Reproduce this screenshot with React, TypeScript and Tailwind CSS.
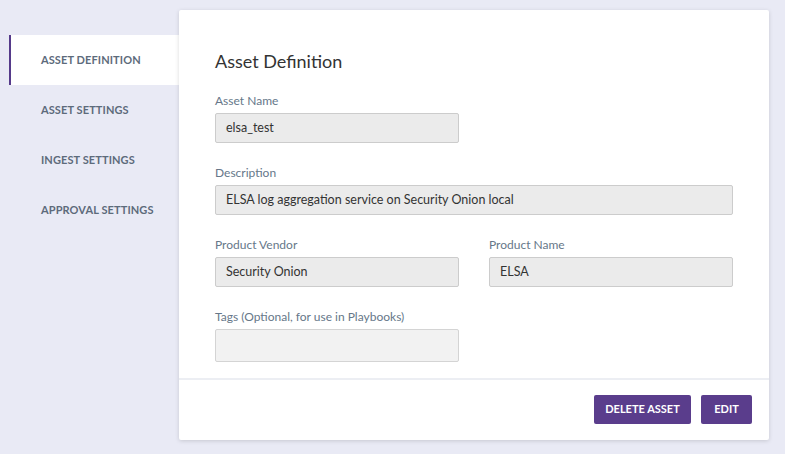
import React from "react";

const navItems = ["Asset Definition", "Asset Settings", "Ingest Settings", "Approval Settings"];

const Field = ({
  label,
  value,
  className,
}: {
  label: string;
  value?: string;
  className?: string;
}) => (
  <div className={className}>
    <p className="text-[12px] leading-[16px] text-[#667789] mb-[4px]">{label}</p>
    <div className="h-[30px] bg-[#ebebeb] border border-[#cccccc] rounded-[2px] px-[10px] flex items-center text-[12.5px] text-[#333]">
      {value}
    </div>
  </div>
);

const App = () => {
  return (
    <div
      className="w-[785px] h-[454px] bg-[#e9eaf5] flex pt-[10px] overflow-hidden"
      style={{ fontFamily: "Lato, 'Open Sans', sans-serif" }}
    >
      <div className="w-[179px] pt-[25px] pl-[9px] shrink-0">
        {navItems.map((item, i) => (
          <div
            key={item}
            className={
              i === 0
                ? "h-[50px] flex items-center pl-[30px] bg-white border-l-2 border-[#553a8a] text-[11px] font-bold uppercase text-[#5d6b7b] tracking-[0.1px]"
                : "h-[50px] flex items-center pl-[32px] text-[11px] font-bold uppercase text-[#5d6b7b] tracking-[0.1px]"
            }
          >
            {item}
          </div>
        ))}
      </div>
      <div className="w-[590px] h-[430px] bg-white rounded-[2px] shadow-[0_1px_4px_rgba(0,0,0,0.15)] flex flex-col">
        <div className="px-[36px] pt-[39px] flex-1">
          <h1 className="text-[18px] leading-[24px] text-[#333] mb-[20px]">Asset Definition</h1>
          <Field label="Asset Name" value="elsa_test" className="w-[244px] mb-[22px]" />
          <Field
            label="Description"
            value="ELSA log aggregation service on Security Onion local"
            className="w-[518px] mb-[22px]"
          />
          <div className="flex gap-[30px] mb-[22px]">
            <Field label="Product Vendor" value="Security Onion" className="w-[244px]" />
            <Field label="Product Name" value="ELSA" className="w-[244px]" />
          </div>
          <div className="w-[244px]">
            <p className="text-[12px] leading-[16px] text-[#667789] mb-[4px]">
              Tags (Optional, for use in Playbooks)
            </p>
            <div className="h-[33px] bg-[#f2f2f2] border border-[#d4d4d4] rounded-[2px]" />
          </div>
        </div>
        <div className="h-[2px] bg-[#eceef3]" />
        <div className="h-[60px] flex items-start justify-end gap-[10px] pt-[15px] pr-[17px]">
          <button className="h-[29px] w-[97px] bg-[#5a3d8c] rounded-[2px] text-white text-[11px] font-bold uppercase">
            Delete Asset
          </button>
          <button className="h-[29px] w-[51px] bg-[#5a3d8c] rounded-[2px] text-white text-[11px] font-bold uppercase">
            Edit
          </button>
        </div>
      </div>
    </div>
  );
};

export default App;
